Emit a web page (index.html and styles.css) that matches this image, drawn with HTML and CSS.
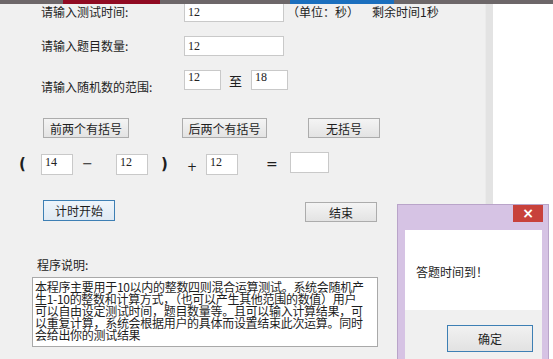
FILE: index.html
```html
<!DOCTYPE html>
<html>
<head>
    <title>四则混合运算测试</title>
    <link rel="stylesheet" href="styles.css">
</head>
<body>
    <div class="topbar">
        <span class="seg-red"></span>
        <span class="seg-blue"></span>
    </div>
    <div class="main">
        <div class="form">
            <div class="row row-time">
                <label class="label">请输入测试时间:</label>
                <input class="field field-wide" type="text" value="12">
                <span class="unit">（单位：秒）</span>
                <span class="remain">剩余时间1秒</span>
            </div>
            <div class="row row-count">
                <label class="label">请输入题目数量:</label>
                <input class="field field-wide" type="text" value="12">
            </div>
            <div class="row row-range">
                <label class="label label-low">请输入随机数的范围:</label>
                <input class="field field-small" type="text" value="12">
                <span class="to">至</span>
                <input class="field field-small" type="text" value="18">
            </div>
            <div class="row row-buttons">
                <button class="btn btn-front">前两个有括号</button>
                <button class="btn btn-back">后两个有括号</button>
                <button class="btn btn-none">无括号</button>
            </div>
            <div class="row row-expr">
                <span class="sym paren-open">(</span>
                <input class="field field-num num-a" type="text" value="14">
                <span class="sym minus">−</span>
                <input class="field field-num num-b" type="text" value="12">
                <span class="sym paren-close">)</span>
                <span class="sym plus">+</span>
                <input class="field field-num num-c" type="text" value="12">
                <span class="sym equals">=</span>
                <input class="field field-answer" type="text" value="">
            </div>
            <div class="row row-actions">
                <button class="btn btn-start">计时开始</button>
                <button class="btn btn-end">结束</button>
            </div>
            <div class="intro-title">程序说明:</div>
            <div class="intro-box">
                <div>本程序主要用于10以内的整数四则混合运算测试。系统会随机产</div>
                <div>生1-10的整数和计算方式，（也可以产生其他范围的数值）用户</div>
                <div>可以自由设定测试时间，题目数量等。且可以输入计算结果，可</div>
                <div>以重复计算，系统会根据用户的具体而设置结束此次运算。同时</div>
                <div>会给出你的测试结果</div>
            </div>
        </div>
        <div class="divider"></div>
        <div class="side"></div>
    </div>

    <div class="dialog">
        <div class="dialog-title">
            <span class="dialog-close">×</span>
        </div>
        <div class="dialog-body">
            <div class="dialog-message">答题时间到！</div>
            <div class="dialog-footer">
                <button class="btn btn-ok">确定</button>
            </div>
        </div>
    </div>
</body>
</html>
```

FILE: styles.css
```css
body {
    margin: 0;
    width: 553px;
    height: 359px;
    overflow: hidden;
    font-family: "Noto Sans CJK SC", "DejaVu Sans", sans-serif;
    font-size: 12px;
    line-height: 16px;
    color: #1e1e1e;
    background-color: #ffffff;
    position: relative;
}
.topbar {
    height: 4px;
    background-color: #6d6769;
    display: flex;
    position: relative;
    z-index: 2;
}
.seg-red {
    margin-left: 63px;
    width: 97px;
    background-color: #900a22;
}
.seg-blue {
    margin-left: 130px;
    width: 104px;
    background-color: #1b6fbe;
}
.main {
    display: flex;
    height: 355px;
}
.form {
    width: 485px;
    background-color: #f0f0f0;
    margin-top: -6px;
    padding-top: 4px;
}
.divider {
    width: 8px;
    background-color: #e3e3e3;
    border-left: 1px solid #ebebeb;
    box-sizing: border-box;
}
.side {
    flex: 1;
    background-color: #ffffff;
}
.row {
    display: flex;
    align-items: center;
    height: 20px;
}
.label {
    width: 184px;
    padding-left: 41px;
    box-sizing: border-box;
    flex-shrink: 0;
    white-space: nowrap;
}
.field {
    font-family: "Liberation Serif", serif;
    font-size: 12px;
    color: #222;
    background-color: #ffffff;
    border: 1px solid #c9c9c9;
    padding: 0 3px;
    margin: 0;
    box-sizing: border-box;
    outline: none;
}
.field-wide {
    width: 100px;
    height: 20px;
}
.field-small {
    width: 37px;
    height: 20px;
    padding-bottom: 6px;
}
.unit {
    margin-left: 3px;
}
.remain {
    margin-left: 13px;
}
.row-count {
    margin-top: 14px;
}
.row-range {
    margin-top: 14px;
    align-items: flex-start;
}
.label-low {
    padding-top: 9px;
}
.to {
    margin: 3px 9px 0 8px;
    font-size: 13px;
}
.row-buttons {
    margin-top: 28px;
}
.btn {
    font-family: "Noto Sans CJK SC", sans-serif;
    font-size: 12px;
    color: #1e1e1e;
    background: linear-gradient(#f4f4f4, #e3e3e3);
    border: 1px solid #acacac;
    border-radius: 0;
    padding: 0;
    height: 20px;
    line-height: 17px;
    cursor: pointer;
}
.btn-front {
    margin-left: 43px;
    width: 86px;
}
.btn-back {
    margin-left: 53px;
    width: 85px;
}
.btn-none {
    margin-left: 41px;
    width: 72px;
}
.row-expr {
    margin-top: 15px;
    height: 22px;
}
.sym {
    font-family: "DejaVu Sans", sans-serif;
    font-weight: bold;
    display: inline-block;
}
.paren-open {
    margin-left: 19px;
    width: 22px;
    font-size: 15px;
}
.field-num {
    width: 32px;
    height: 21px;
    padding-bottom: 4px;
}
.minus {
    margin-left: 9px;
    width: 34px;
    font-weight: normal;
    font-size: 13px;
}
.paren-close {
    margin-left: 13px;
    width: 26px;
    font-size: 15px;
}
.plus {
    width: 21px;
    font-weight: normal;
    font-size: 12px;
    padding-top: 5px;
}
.num-c {
    margin-left: -2px;
}
.equals {
    margin-left: 28px;
    width: 24px;
    font-weight: normal;
    font-size: 14px;
}
.field-answer {
    width: 39px;
    height: 21px;
    margin-top: -4px;
}
.row-actions {
    margin-top: 25px;
    height: 21px;
    align-items: flex-end;
}
.btn-start {
    margin-left: 43px;
    width: 72px;
    height: 21px;
    border-color: #3d7fb4;
    background: linear-gradient(#eef5fb, #dfe9f3);
}
.btn-end {
    margin-left: 190px;
    width: 72px;
    margin-bottom: -1px;
}
.intro-title {
    margin-top: 36px;
    padding-left: 37px;
}
.intro-box {
    margin: 4px 0 0 32px;
    width: 346px;
    height: 70px;
    box-sizing: border-box;
    background-color: #ffffff;
    border: 1px solid #a9a9a9;
    padding: 3px 2px 0;
    font-size: 12px;
    line-height: 12px;
    letter-spacing: -0.3px;
    white-space: nowrap;
    overflow: hidden;
}
.dialog {
    position: absolute;
    left: 397px;
    top: 204px;
    width: 152px;
    height: 160px;
    background-color: #d6c3e4;
    border: 1px solid #b9a4c9;
    box-sizing: border-box;
    padding: 0 6px 0 7px;
    z-index: 3;
}
.dialog-title {
    height: 25px;
    display: flex;
    justify-content: flex-end;
    align-items: flex-start;
}
.dialog-close {
    width: 30px;
    height: 17px;
    margin-right: -1px;
    background-color: #c8413b;
    color: #ffffff;
    font-family: "DejaVu Sans", sans-serif;
    font-weight: bold;
    font-size: 14px;
    line-height: 16px;
    text-align: center;
}
.dialog-body {
    background-color: #ffffff;
    height: 140px;
    display: flex;
    flex-direction: column;
}
.dialog-message {
    height: 80px;
    padding: 34px 0 0 11px;
    box-sizing: border-box;
}
.dialog-footer {
    flex: 1;
    background-color: #f0f0f0;
    padding: 15px 0 0 42px;
}
.btn-ok {
    width: 86px;
    height: 27px;
    border-color: #3d7fb4;
    background: linear-gradient(#f1f1f1, #e2e2e2);
}
```
